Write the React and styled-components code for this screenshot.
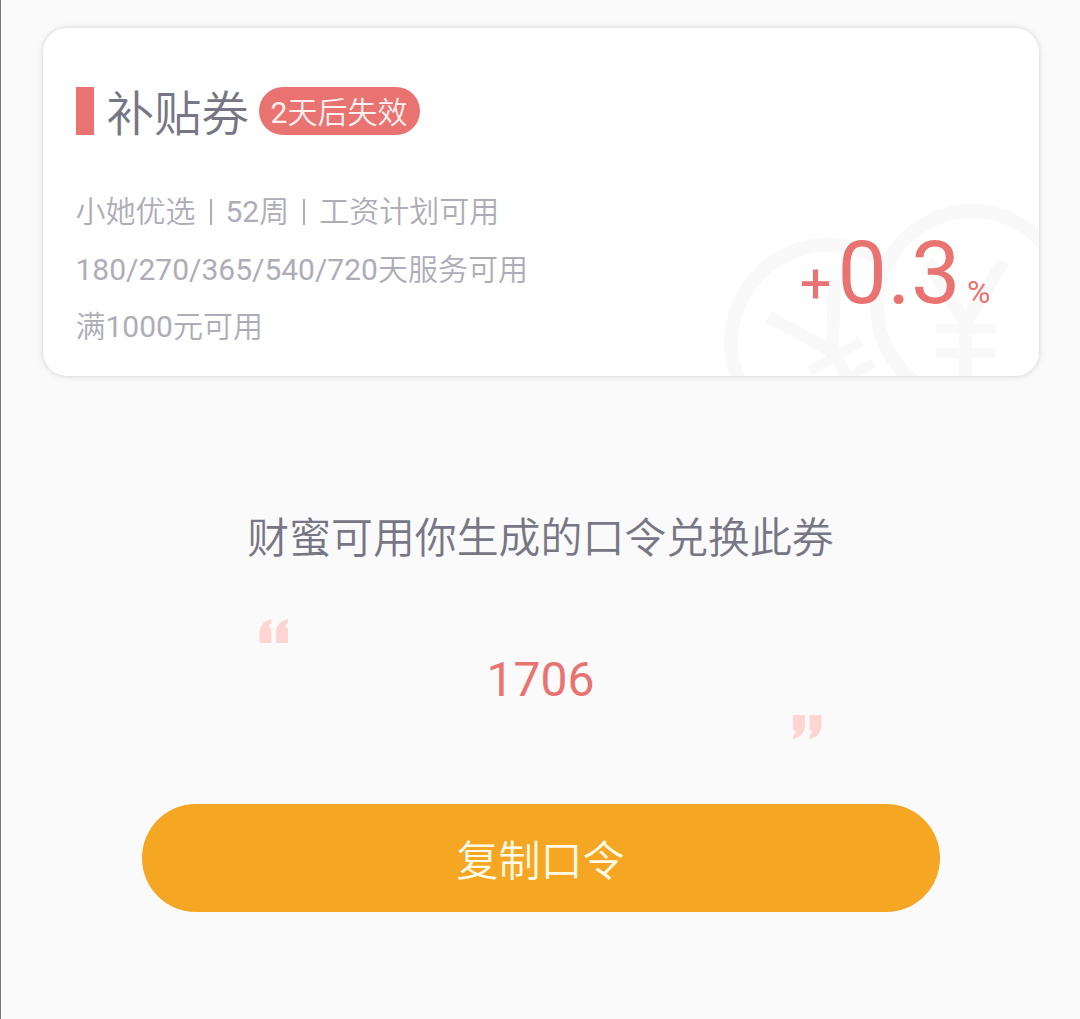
import React from "react";
import styled, { createGlobalStyle } from "styled-components";

const Coral = "#e87371";
const Ink = "#777684";
const Muted = "#aeadb7";

const GlobalStyle = createGlobalStyle`
  * {
    box-sizing: border-box;
  }

  body {
    margin: 0;
    background: #fafafa;
    font-family: Roboto, "Noto Sans CJK SC", sans-serif;
  }
`;

const Page = styled.main`
  display: flex;
  flex-direction: column;
  align-items: center;
  height: 1019px;
  padding-top: 28px;
  border-left: 1px solid #77777a;
  overflow: hidden;
`;

const Card = styled.section`
  position: relative;
  display: flex;
  justify-content: space-between;
  width: 996px;
  height: 348px;
  padding: 58px 48px 0 33px;
  border-radius: 24px;
  background: #fff;
  box-shadow: 0 0 5px rgba(0, 0, 0, 0.15), 0 2px 14px rgba(0, 0, 0, 0.035);
  overflow: hidden;
`;

const Coins = styled.svg`
  position: absolute;
  right: 0;
  bottom: 0;
`;

const Details = styled.div`
  position: relative;
`;

const Heading = styled.div`
  display: flex;
  align-items: center;
  height: 50px;
`;

const Marker = styled.span`
  width: 18px;
  height: 48px;
  margin-right: 13px;
  background: ${Coral};
`;

const Title = styled.h1`
  margin: 0;
  padding-top: 7px;
  color: ${Ink};
  font-size: 47.5px;
  font-weight: 350;
  line-height: 48px;
`;

const Expiry = styled.span`
  width: 161px;
  height: 48px;
  margin-left: 9.5px;
  border-radius: 24px;
  background: ${Coral};
  color: #fff0f0;
  font-size: 30px;
  font-weight: 350;
  line-height: 51px;
  text-align: center;
  white-space: nowrap;
`;

const Terms = styled.ul`
  margin: 47px 0 0;
  padding: 0;
  list-style: none;
  color: ${Muted};
  font-size: 30px;
  font-weight: 350;
  line-height: 58px;
`;

const Term = styled.li`
  white-space: nowrap;

  &:last-child {
    line-height: 56px;
  }
`;

const Digits = styled.span`
  font-weight: 400;
`;

const Divider = styled.span`
  display: inline-block;
  width: 2px;
  height: 26px;
  margin: 0 14px;
  background: ${Muted};
  vertical-align: -3px;
`;

const Rate = styled.div`
  position: relative;
  display: flex;
  align-items: baseline;
  margin-top: 132px;
  height: 110px;
  color: ${Coral};
  line-height: 110px;
`;

const Sign = styled.span`
  font-size: 56px;
`;

const Amount = styled.span`
  margin-left: 6px;
  font-size: 88px;
  letter-spacing: 0.5px;
`;

const Percent = styled.span`
  margin-left: 6px;
  font-size: 32px;
`;

const Hint = styled.p`
  margin: 133px 0 0;
  color: ${Ink};
  font-size: 41.9px;
  font-weight: 350;
  line-height: 60px;
`;

const CodeBox = styled.div`
  display: grid;
  grid-template-columns: 30px 1fr 30px;
  width: 563px;
  height: 120px;
  margin-top: 50px;
`;

const Quote = styled.svg`
  display: block;
  align-self: ${(props) => (props.$closing ? "end" : "start")};
  transform: ${(props) => (props.$closing ? "rotate(180deg)" : "none")};
  fill: #ffd5d4;
`;

const Code = styled.strong`
  align-self: center;
  padding-top: 1px;
  color: ${Coral};
  font-size: 48px;
  font-weight: 400;
  line-height: 56px;
  text-align: center;
`;

const CopyButton = styled.button`
  width: 798px;
  height: 108px;
  margin-top: 65px;
  padding: 0 0 2px;
  border: 0;
  border-radius: 54px;
  background: #f5a623;
  color: #fffbe6;
  font-family: inherit;
  font-size: 42px;
  font-weight: 350;
`;

const YuanMark = () => (
  <g fill="none" stroke="#f9f9f9">
    <path d="M-38-59L0 3L38-59" strokeWidth="13" />
    <path d="M0 0V90" strokeWidth="13" />
    <path d="M-30 8.500H30M-30 33H30" strokeWidth="10" />
  </g>
);

const CoinArt = () => (
  <Coins width="330" height="190" viewBox="710 186 330 190">
    <circle cx="830" cy="343" r="98" fill="#fff" stroke="#f9f9f9" strokeWidth="14" />
    <g transform="translate(832 349) rotate(-30)">
      <YuanMark />
    </g>
    <circle cx="973" cy="306" r="95" fill="#fff" stroke="#f9f9f9" strokeWidth="14" />
    <g transform="translate(966.5 320)">
      <YuanMark />
    </g>
  </Coins>
);

const QuoteMark = ({ closing }) => (
  <Quote $closing={closing} width="30" height="24" viewBox="0 0 30 24">
    <path d="M0.500 24V13Q1.500 2 12.500 0V4Q9.500 5.500 10 8L12.500 9.500V24Z" />
    <path d="M17 24V13Q18 2 29 0V4Q26 5.500 26.500 8L29 9.500V24Z" />
  </Quote>
);

const App = () => {
  return (
    <>
      <GlobalStyle />
      <Page>
        <Card>
          <CoinArt />
          <Details>
            <Heading>
              <Marker />
              <Title>补贴券</Title>
              <Expiry>
                <Digits>2</Digits>天后失效
              </Expiry>
            </Heading>
            <Terms>
              <Term>
                小她优选
                <Divider />
                <Digits>52</Digits>周
                <Divider />
                工资计划可用
              </Term>
              <Term>
                <Digits>180/270/365/540/720</Digits>天服务可用
              </Term>
              <Term>
                满<Digits>1000</Digits>元可用
              </Term>
            </Terms>
          </Details>
          <Rate>
            <Sign>+</Sign>
            <Amount>0.3</Amount>
            <Percent>%</Percent>
          </Rate>
        </Card>
        <Hint>财蜜可用你生成的口令兑换此券</Hint>
        <CodeBox>
          <QuoteMark />
          <Code>1706</Code>
          <QuoteMark closing />
        </CodeBox>
        <CopyButton type="button">复制口令</CopyButton>
      </Page>
    </>
  );
};

export default App;
